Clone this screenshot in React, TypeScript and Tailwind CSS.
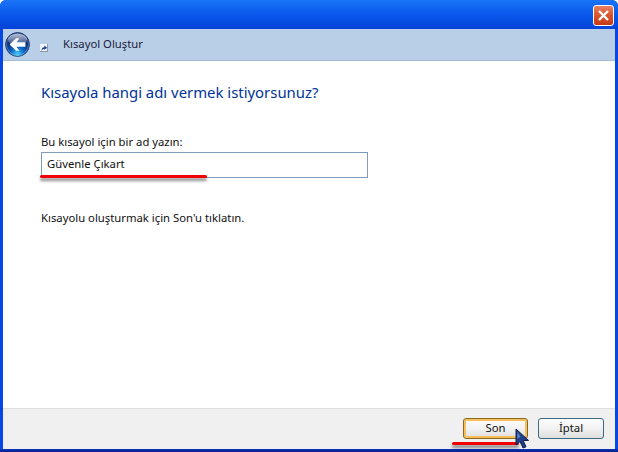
import { useState } from "react";

const font = { fontFamily: '"Noto Sans", sans-serif' };

function BackOrb() {
  return (
    <svg width="25" height="25" viewBox="0 0 26 26">
      <defs>
        <radialGradient id="orb" cx="50%" cy="90%" r="62%">
          <stop offset="0%" stopColor="#45d0f8" />
          <stop offset="50%" stopColor="#0a5fc0" />
          <stop offset="100%" stopColor="#0a2a6e" />
        </radialGradient>
        <linearGradient id="gloss" x1="0" y1="0" x2="0" y2="1">
          <stop offset="0%" stopColor="#ffffff" stopOpacity="0.7" />
          <stop offset="100%" stopColor="#ffffff" stopOpacity="0.12" />
        </linearGradient>
      </defs>
      <circle cx="13" cy="13" r="12.4" fill="url(#orb)" stroke="#0f2f6f" strokeWidth="0.8" />
      <circle cx="13" cy="13" r="11.4" fill="none" stroke="#d5e4f5" strokeOpacity="0.55" strokeWidth="0.7" />
      <ellipse cx="13" cy="8" rx="10" ry="6.3" fill="url(#gloss)" />
      <path d="M4.8 13 L11.6 6.4 L15 6.4 L12 10.6 L21.2 10.6 L21.2 15.4 L12 15.4 L15 19.6 L11.6 19.6 Z" fill="#ffffff" />
    </svg>
  );
}

function ShortcutIcon() {
  return (
    <svg width="8" height="8" viewBox="0 0 8 8">
      <rect x="0" y="0" width="8" height="8" fill="#f2f5fa" />
      <rect x="0" y="7" width="8" height="1" fill="#8b97a8" />
      <rect x="7" y="0" width="1" height="8" fill="#8b97a8" />
      <path d="M1.5 7 C1.5 4.5 2.5 3.2 4.4 3.2 L4.4 1.4 L7 3.8 L4.4 6 L4.4 4.8 C3.2 4.8 2.4 5.6 1.5 7 Z" fill="#123a9c" />
    </svg>
  );
}

function CloseButton() {
  return (
    <div className="flex h-[21px] w-[21px] items-center justify-center rounded-[3px] border border-white bg-gradient-to-b from-[#e8805f] via-[#d9532c] to-[#c53a14]">
      <svg width="13" height="13" viewBox="0 0 13 13">
        <path d="M2 2 L11 11 M11 2 L2 11" stroke="#ffffff" strokeWidth="2.4" />
      </svg>
    </div>
  );
}

function Cursor() {
  return (
    <svg width="16" height="22" viewBox="0 0 16 22">
      <path d="M1 1 L1 17 L5 13.5 L8 20 L11 18.8 L8.2 12.6 L13.5 12.4 Z" fill="#1f3f86" stroke="#0c1c4c" strokeWidth="1" />
      <path d="M2.4 4 L2.4 11 L5.5 8.5 Z" fill="#5d82c8" />
    </svg>
  );
}

function RedLine({ className }: { className: string }) {
  return (
    <div className={`absolute h-[3px] rounded-full bg-[#f00000] shadow-[0_3px_3px_rgba(0,0,0,0.45)] ${className}`} />
  );
}

export default function App() {
  const [name, setName] = useState("Güvenle Çıkart");

  return (
    <div className="relative flex h-[452px] w-[618px] flex-col overflow-hidden rounded-t-[6px] bg-[#0645e6] text-[11.3px] text-[#111]" style={font}>
      {/* Title bar */}
      <div className="flex h-[29px] flex-none items-start justify-end bg-gradient-to-b from-[#1b74f5] via-[#0a58ec] to-[#0342d8] pr-[4px] pt-[5px]">
        <CloseButton />
      </div>

      {/* Window body */}
      <div className="ml-[3px] mr-[3px] flex min-h-0 flex-1 flex-col">
        <div className="flex h-[32px] flex-none items-center border-b border-[#a3bdd6] bg-[#b9cfe8] pl-[2px]">
          <BackOrb />
          <div className="ml-[10px] mt-[6px] flex-none">
            <ShortcutIcon />
          </div>
          <span className="ml-[15px] text-[#1b1b3a]">Kısayol Oluştur</span>
        </div>

        <div className="flex-1 bg-white pl-[38px] pt-[21px]">
          <h1 className="text-[14.9px] leading-[20px] font-normal text-[#003399]">Kısayola hangi adı vermek istiyorsunuz?</h1>
          <label className="mt-[31px] block leading-[17px]">Bu kısayol için bir ad yazın:</label>
          <input
            value={name}
            onChange={(e) => setName(e.target.value)}
            className="mt-[2px] block h-[26px] w-[327px] border border-[#7f9db9] pl-[5px] pb-[4px] text-[11.3px] outline-none"
          />
          <p className="mt-[31px] leading-[17px]">Kısayolu oluşturmak için Son'u tıklatın.</p>
        </div>

        <div className="flex h-[41px] flex-none items-start justify-end gap-[10px] border-t border-[#dfdfdf] bg-[#f0f0f0] pr-[11px] pt-[9px]">
          <button className="h-[21px] w-[65px] rounded-[3px] border border-[#8a6a22] bg-gradient-to-b from-[#fdfdfd] via-[#f2f2f2] to-[#dedede] shadow-[inset_0_0_0_2px_#f6bf5a] text-[11.3px]">
            Son
          </button>
          <button className="h-[21px] w-[66px] rounded-[3px] border border-[#3c6a80] bg-gradient-to-b from-[#fdfdfd] via-[#f2f2f2] to-[#dedede] text-[11.3px]">
            İptal
          </button>
        </div>
      </div>

      <div className="h-[3px] flex-none bg-gradient-to-b from-[#0a35c0] to-[#06208a]" />

      {/* Annotations */}
      <RedLine className="left-[40px] top-[175px] w-[167px]" />
      <RedLine className="left-[452px] top-[442px] w-[67px]" />
      <div className="absolute left-[515px] top-[428px]">
        <Cursor />
      </div>
    </div>
  );
}
